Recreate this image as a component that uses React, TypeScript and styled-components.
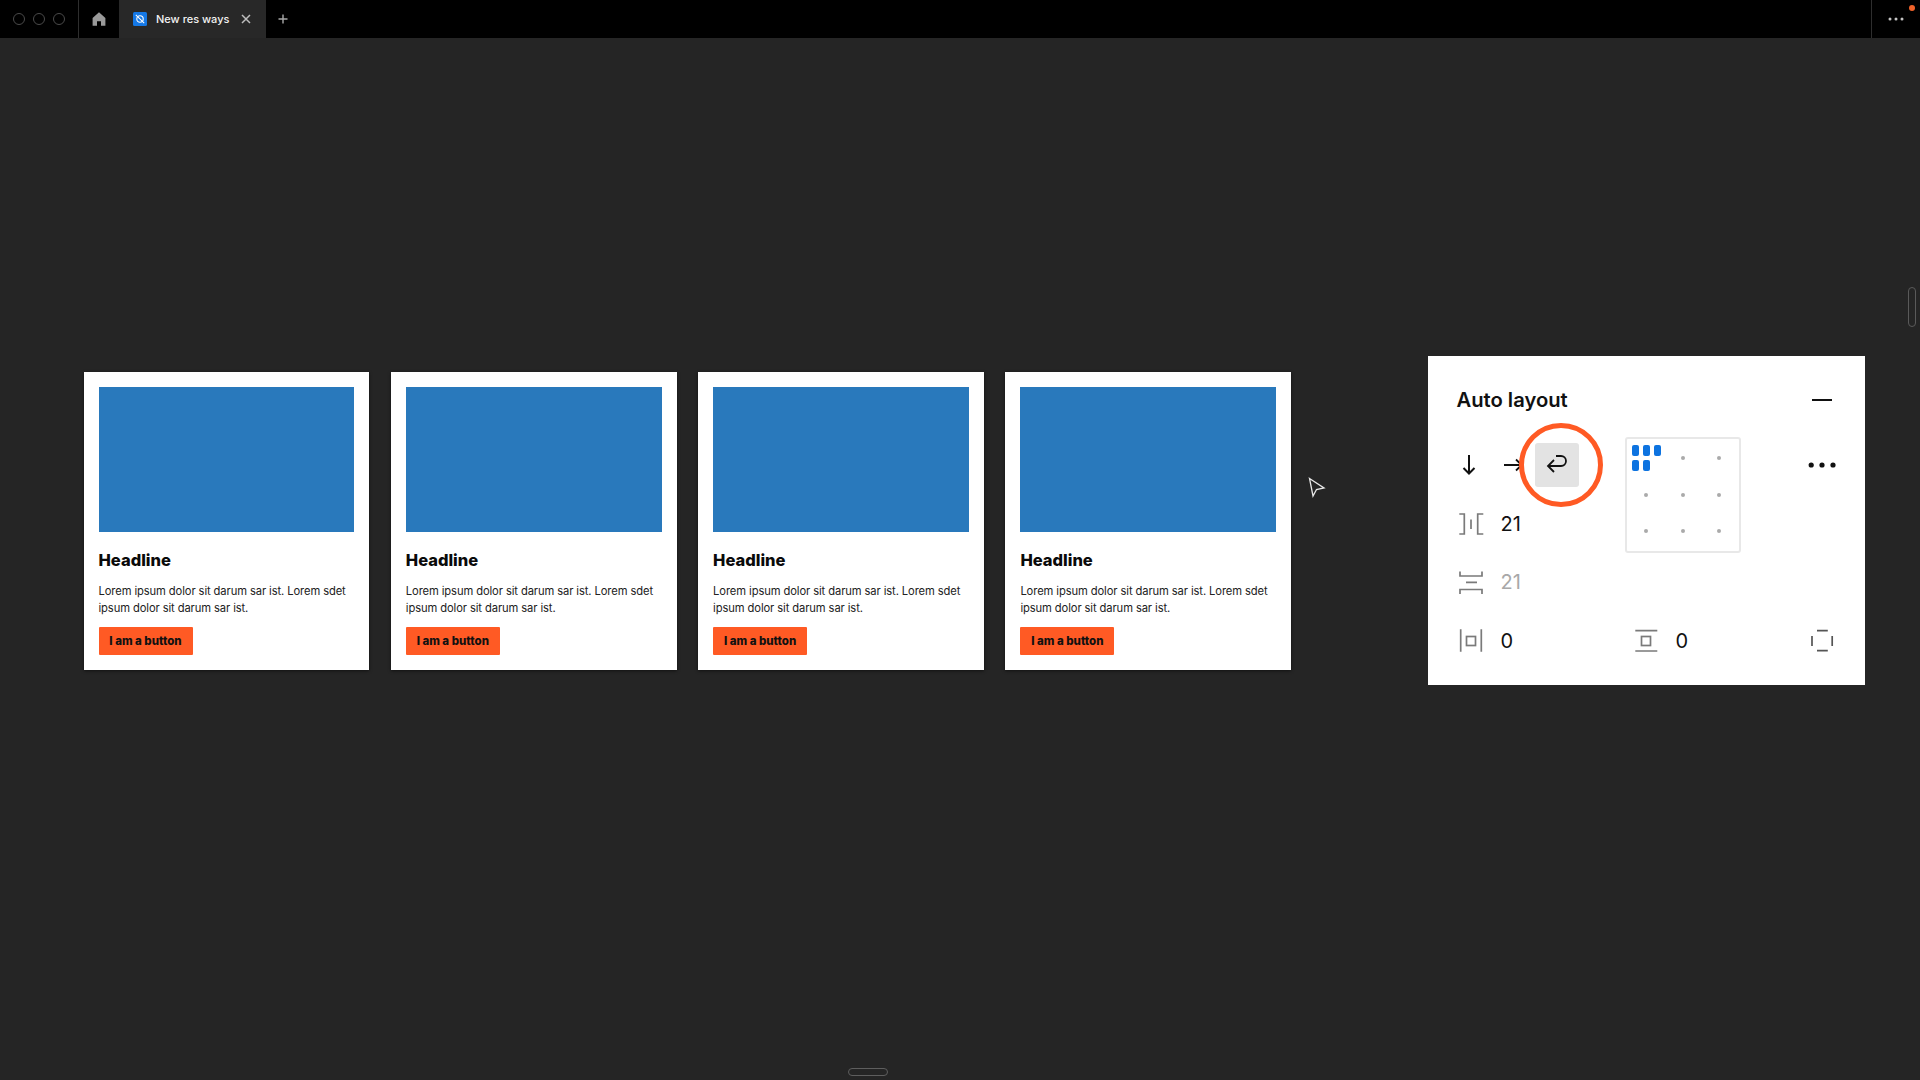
import React from "react";
import styled, { createGlobalStyle } from "styled-components";

const GlobalStyle = createGlobalStyle`
  html, body { margin: 0; padding: 0; background: #252525; }
  body { font-family: Inter, "Liberation Sans", sans-serif; }
  * { box-sizing: border-box; }
`;

const Page = styled.div`
  width: 1920px;
  height: 1080px;
  display: flex;
  flex-direction: column;
  overflow: hidden;
  background: #252525;
`;

const TopBar = styled.header`
  height: 38px;
  flex: none;
  display: flex;
  align-items: stretch;
  background: #000;
`;

const Lights = styled.div`
  width: 79px;
  display: flex;
  align-items: center;
  gap: 8px;
  padding-left: 13px;
  border-right: 1px solid #2e2e2e;
`;

const Light = styled.span`
  width: 12px;
  height: 12px;
  border-radius: 50%;
  border: 1px solid #4a4a4a;
`;

const IconCell = styled.div<{ $w: number }>`
  width: ${(p) => p.$w}px;
  display: flex;
  align-items: center;
  justify-content: center;
`;

const Tab = styled.div`
  width: 147px;
  display: flex;
  align-items: center;
  padding-left: 14px;
  background: #282828;
`;

const TabTitle = styled.span`
  margin-left: 9px;
  width: 85px;
  font-size: 11px;
  font-weight: 500;
  color: #f2f2f2;
  white-space: nowrap;
`;

const MoreCell = styled.div`
  position: relative;
  margin-left: auto;
  width: 49px;
  display: flex;
  align-items: center;
  justify-content: center;
  border-left: 1px solid #2e2e2e;
`;

const Badge = styled.span`
  position: absolute;
  top: 5px;
  right: 5px;
  width: 6px;
  height: 6px;
  border-radius: 50%;
  background: #f0622a;
`;

const Canvas = styled.main`
  position: relative;
  flex: 1;
  display: flex;
  align-items: center;
  padding: 0 55px 77px 83.5px;
`;

const Cards = styled.section`
  display: flex;
  gap: 21.5px;
  margin-top: 1px;
`;

const Card = styled.article`
  width: 285.8px;
  height: 298px;
  padding: 15px;
  background: #fff;
  box-shadow: 0 1px 3px rgba(0, 0, 0, 0.55);
  display: flex;
  flex-direction: column;
  align-items: flex-start;
`;

const Thumb = styled.div`
  width: 100%;
  height: 145px;
  flex: none;
  background: #2979bc;
`;

const Headline = styled.h2`
  margin: 18px 0 0;
  font-size: 16.5px;
  line-height: 20px;
  font-weight: 800;
  color: #0a0a0a;
`;

const Body = styled.p`
  margin: 13px 0 0;
  font-size: 11.2px;
  line-height: 17px;
  letter-spacing: -0.1px;
  font-weight: 400;
  color: #222;
`;

const CardButton = styled.div`
  margin-top: 9.5px;
  width: 94px;
  height: 28px;
  display: flex;
  align-items: center;
  justify-content: center;
  border-radius: 1px;
  background: #ff5a24;
  font-size: 11.5px;
  font-weight: 800;
  color: #111;
`;

const Panel = styled.aside`
  margin-left: auto;
  width: 437.5px;
  height: 329px;
  background: #fff;
  padding: 0 29px;
`;

const PanelHeader = styled.div`
  height: 80px;
  display: flex;
  align-items: flex-start;
  justify-content: space-between;
  padding-top: 30px;
`;

const PanelTitle = styled.h3`
  margin: 0;
  font-size: 20.2px;
  line-height: 28px;
  font-weight: 600;
  color: #111;
`;

const PanelGrid = styled.div`
  display: grid;
  grid-template-columns: 168px 116px 1fr;
  grid-template-rows: repeat(4, 58.5px);
`;

const Cell = styled.div<{ $end?: boolean; $col?: number; $row?: number; $inset?: number }>`
  display: flex;
  align-items: center;
  justify-content: ${(p) => (p.$end ? "flex-end" : "flex-start")};
  gap: 16px;
  grid-column: ${(p) => p.$col ?? "auto"};
  grid-row: ${(p) => p.$row ?? "auto"};
  padding-left: ${(p) => p.$inset ?? 0}px;
`;

const DirectionCell = styled.div`
  display: flex;
  align-items: center;
`;

const WrapButton = styled.div`
  position: relative;
  width: 44px;
  height: 44px;
  margin-left: 10px;
  border-radius: 3px;
  background: #e3e3e3;
`;

const Ring = styled.span`
  position: absolute;
  left: -16px;
  top: -20px;
  width: 84px;
  height: 84px;
  border-radius: 50%;
  border: 5px solid #ff5a24;
`;

const ArrowSlot = styled.span`
  display: flex;
  margin-right: 20px;
`;

const Value = styled.span<{ $muted?: boolean }>`
  font-size: 20px;
  line-height: 24px;
  font-weight: 400;
  color: ${(p) => (p.$muted ? "#a8a8a8" : "#111")};
`;

const AlignBox = styled.div`
  grid-column: 2;
  grid-row: 1 / span 3;
  width: 116px;
  height: 116px;
  margin-top: 0.5px;
  border: 2px solid #e8e8e8;
  border-radius: 3px;
  display: grid;
  grid-template-columns: repeat(3, 36.5px);
  grid-template-rows: repeat(3, 36.5px);
  justify-content: center;
  align-content: center;
  place-items: center;
`;

const Dot = styled.span`
  width: 4px;
  height: 4px;
  border-radius: 50%;
  background: #aaa;
`;

const Bars = styled.div`
  width: 29px;
  display: flex;
  flex-wrap: wrap;
  gap: 4px;
`;

const Bar = styled.span`
  width: 7px;
  height: 11px;
  border-radius: 2px;
  background: #0d73e0;
`;

const Pointer = styled.svg`
  position: absolute;
  left: 1305px;
  top: 437px;
`;

const SideHandle = styled.span`
  position: absolute;
  left: 1908px;
  top: 249px;
  width: 8px;
  height: 40px;
  border: 1px solid #5a5a5a;
  border-radius: 4px;
`;

const BottomHandle = styled.span`
  position: absolute;
  left: 848px;
  top: 1030px;
  width: 40px;
  height: 8px;
  border: 1px solid #5e5e5e;
  border-radius: 4px;
`;

const gray = "#7a7a7a";

const Glyph: React.FC<{ size?: number; color?: string; width?: number; children: React.ReactNode }> = ({
  size = 28,
  color = gray,
  width = 1.7,
  children,
}) => (
  <svg width={size} height={size} viewBox={`0 0 ${size} ${size}`} fill="none" stroke={color} strokeWidth={width} style={{ flex: "none" }}>
    {children}
  </svg>
);

const CARD_IDS = [1, 2, 3, 4];

export default function App() {
  return (
    <Page>
      <GlobalStyle />
      <TopBar>
        <Lights>
          <Light />
          <Light />
          <Light />
        </Lights>
        <IconCell $w={40}>
          <svg width="14" height="14" viewBox="0 0 14 14" fill="#9a9a9a">
            <path d="M7 .3 13.4 6v7.7H9V9.2H5v4.5H.6V6z" />
          </svg>
        </IconCell>
        <Tab>
          <svg width="14" height="14" viewBox="0 0 14 14">
            <rect width="14" height="14" rx="1.5" fill="#1478e6" />
            <circle cx="7" cy="7" r="3.2" fill="none" stroke="#fff" strokeWidth="1.1" />
            <path d="M2.8 2.8 11.2 11.2" stroke="#fff" strokeWidth="1.1" />
          </svg>
          <TabTitle>New res ways</TabTitle>
          <svg width="10" height="10" viewBox="0 0 10 10" stroke="#bdbdbd" strokeWidth="1.5">
            <path d="M1 1 9 9M9 1 1 9" />
          </svg>
        </Tab>
        <IconCell $w={34}>
          <svg width="10" height="10" viewBox="0 0 10 10" stroke="#a8a8a8" strokeWidth="1.4">
            <path d="M5 .5v9M.5 5h9" />
          </svg>
        </IconCell>
        <MoreCell>
          <svg width="16" height="4" viewBox="0 0 16 4" fill="#c4c4c4">
            <circle cx="2" cy="2" r="1.5" />
            <circle cx="8" cy="2" r="1.5" />
            <circle cx="14" cy="2" r="1.5" />
          </svg>
          <Badge />
        </MoreCell>
      </TopBar>
      <Canvas>
        <Cards>
          {CARD_IDS.map((id) => (
            <Card key={id}>
              <Thumb />
              <Headline>Headline</Headline>
              <Body>
                Lorem ipsum dolor sit darum sar ist. Lorem sdet ipsum dolor sit darum sar ist.
              </Body>
              <CardButton>I am a button</CardButton>
            </Card>
          ))}
        </Cards>
        <Panel>
          <PanelHeader>
            <PanelTitle>Auto layout</PanelTitle>
            <Glyph color="#111" width={2}>
              <path d="M4 14H24" />
            </Glyph>
          </PanelHeader>
          <PanelGrid>
            <DirectionCell>
              <ArrowSlot>
                <Glyph size={24} color="#111" width={2}>
                  <path d="M12 2v18.5M6.5 15l5.5 5.5 5.5-5.5" />
                </Glyph>
              </ArrowSlot>
              <Glyph size={24} color="#111" width={1.8}>
                <path d="M3 12h17.7M15 6.5l5.7 5.5-5.7 5.5" />
              </Glyph>
              <WrapButton>
                <Glyph size={44} color="#111" width={1.8}>
                  <path d="M21 13h5a5 5 0 0 1 0 10H13M19 17l-6 6 6 6" />
                </Glyph>
                <Ring />
              </WrapButton>
            </DirectionCell>
            <AlignBox>
              <Bars>
                <Bar />
                <Bar />
                <Bar />
                <Bar />
                <Bar />
              </Bars>
              {[1, 2, 3, 4, 5, 6, 7, 8].map((d) => (
                <Dot key={d} />
              ))}
            </AlignBox>
            <Cell $end $col={3}>
              <Glyph color="#111">
                <circle cx="3.2" cy="14" r="2.6" fill="#111" stroke="none" />
                <circle cx="14" cy="14" r="2.6" fill="#111" stroke="none" />
                <circle cx="25" cy="14" r="2.6" fill="#111" stroke="none" />
              </Glyph>
            </Cell>
            <Cell $col={1} $row={2}>
              <Glyph>
                <path d="M2.3 4h5v20h-5M14 9.5V19M26.3 4h-5.6v20h5.6" />
              </Glyph>
              <Value>21</Value>
            </Cell>
            <Cell $col={1} $row={3}>
              <Glyph>
                <path d="M3 3.5V8h22V3.5M3 26v-4.5h22V26M9 14.3h11" />
              </Glyph>
              <Value $muted>21</Value>
            </Cell>
            <Cell $col={1} $row={4}>
              <Glyph>
                <path d="M3.7 2.3v22.4M24.3 2.3v22.4" />
                <rect x="9.5" y="9.5" width="9" height="9" />
              </Glyph>
              <Value>0</Value>
            </Cell>
            <Cell $col={2} $row={4} $inset={7}>
              <Glyph>
                <path d="M3.3 3.7h22M3.3 24h22" />
                <rect x="9.5" y="9.5" width="9" height="9" />
              </Glyph>
              <Value>0</Value>
            </Cell>
            <Cell $end $col={3} $row={4}>
              <Glyph color="#555">
                <path d="M9 3.7h10.8M9 23.7h10.8M4 9v10M24.2 9v10" />
              </Glyph>
            </Cell>
          </PanelGrid>
        </Panel>
        <Pointer width="24" height="24" viewBox="0 0 24 24" fill="#252525" stroke="#e8e8e8" strokeWidth="1.3">
          <path d="M4.5 3.5 19 13l-7.5 1.5L8 21z" />
        </Pointer>
        <SideHandle />
        <BottomHandle />
      </Canvas>
    </Page>
  );
}
